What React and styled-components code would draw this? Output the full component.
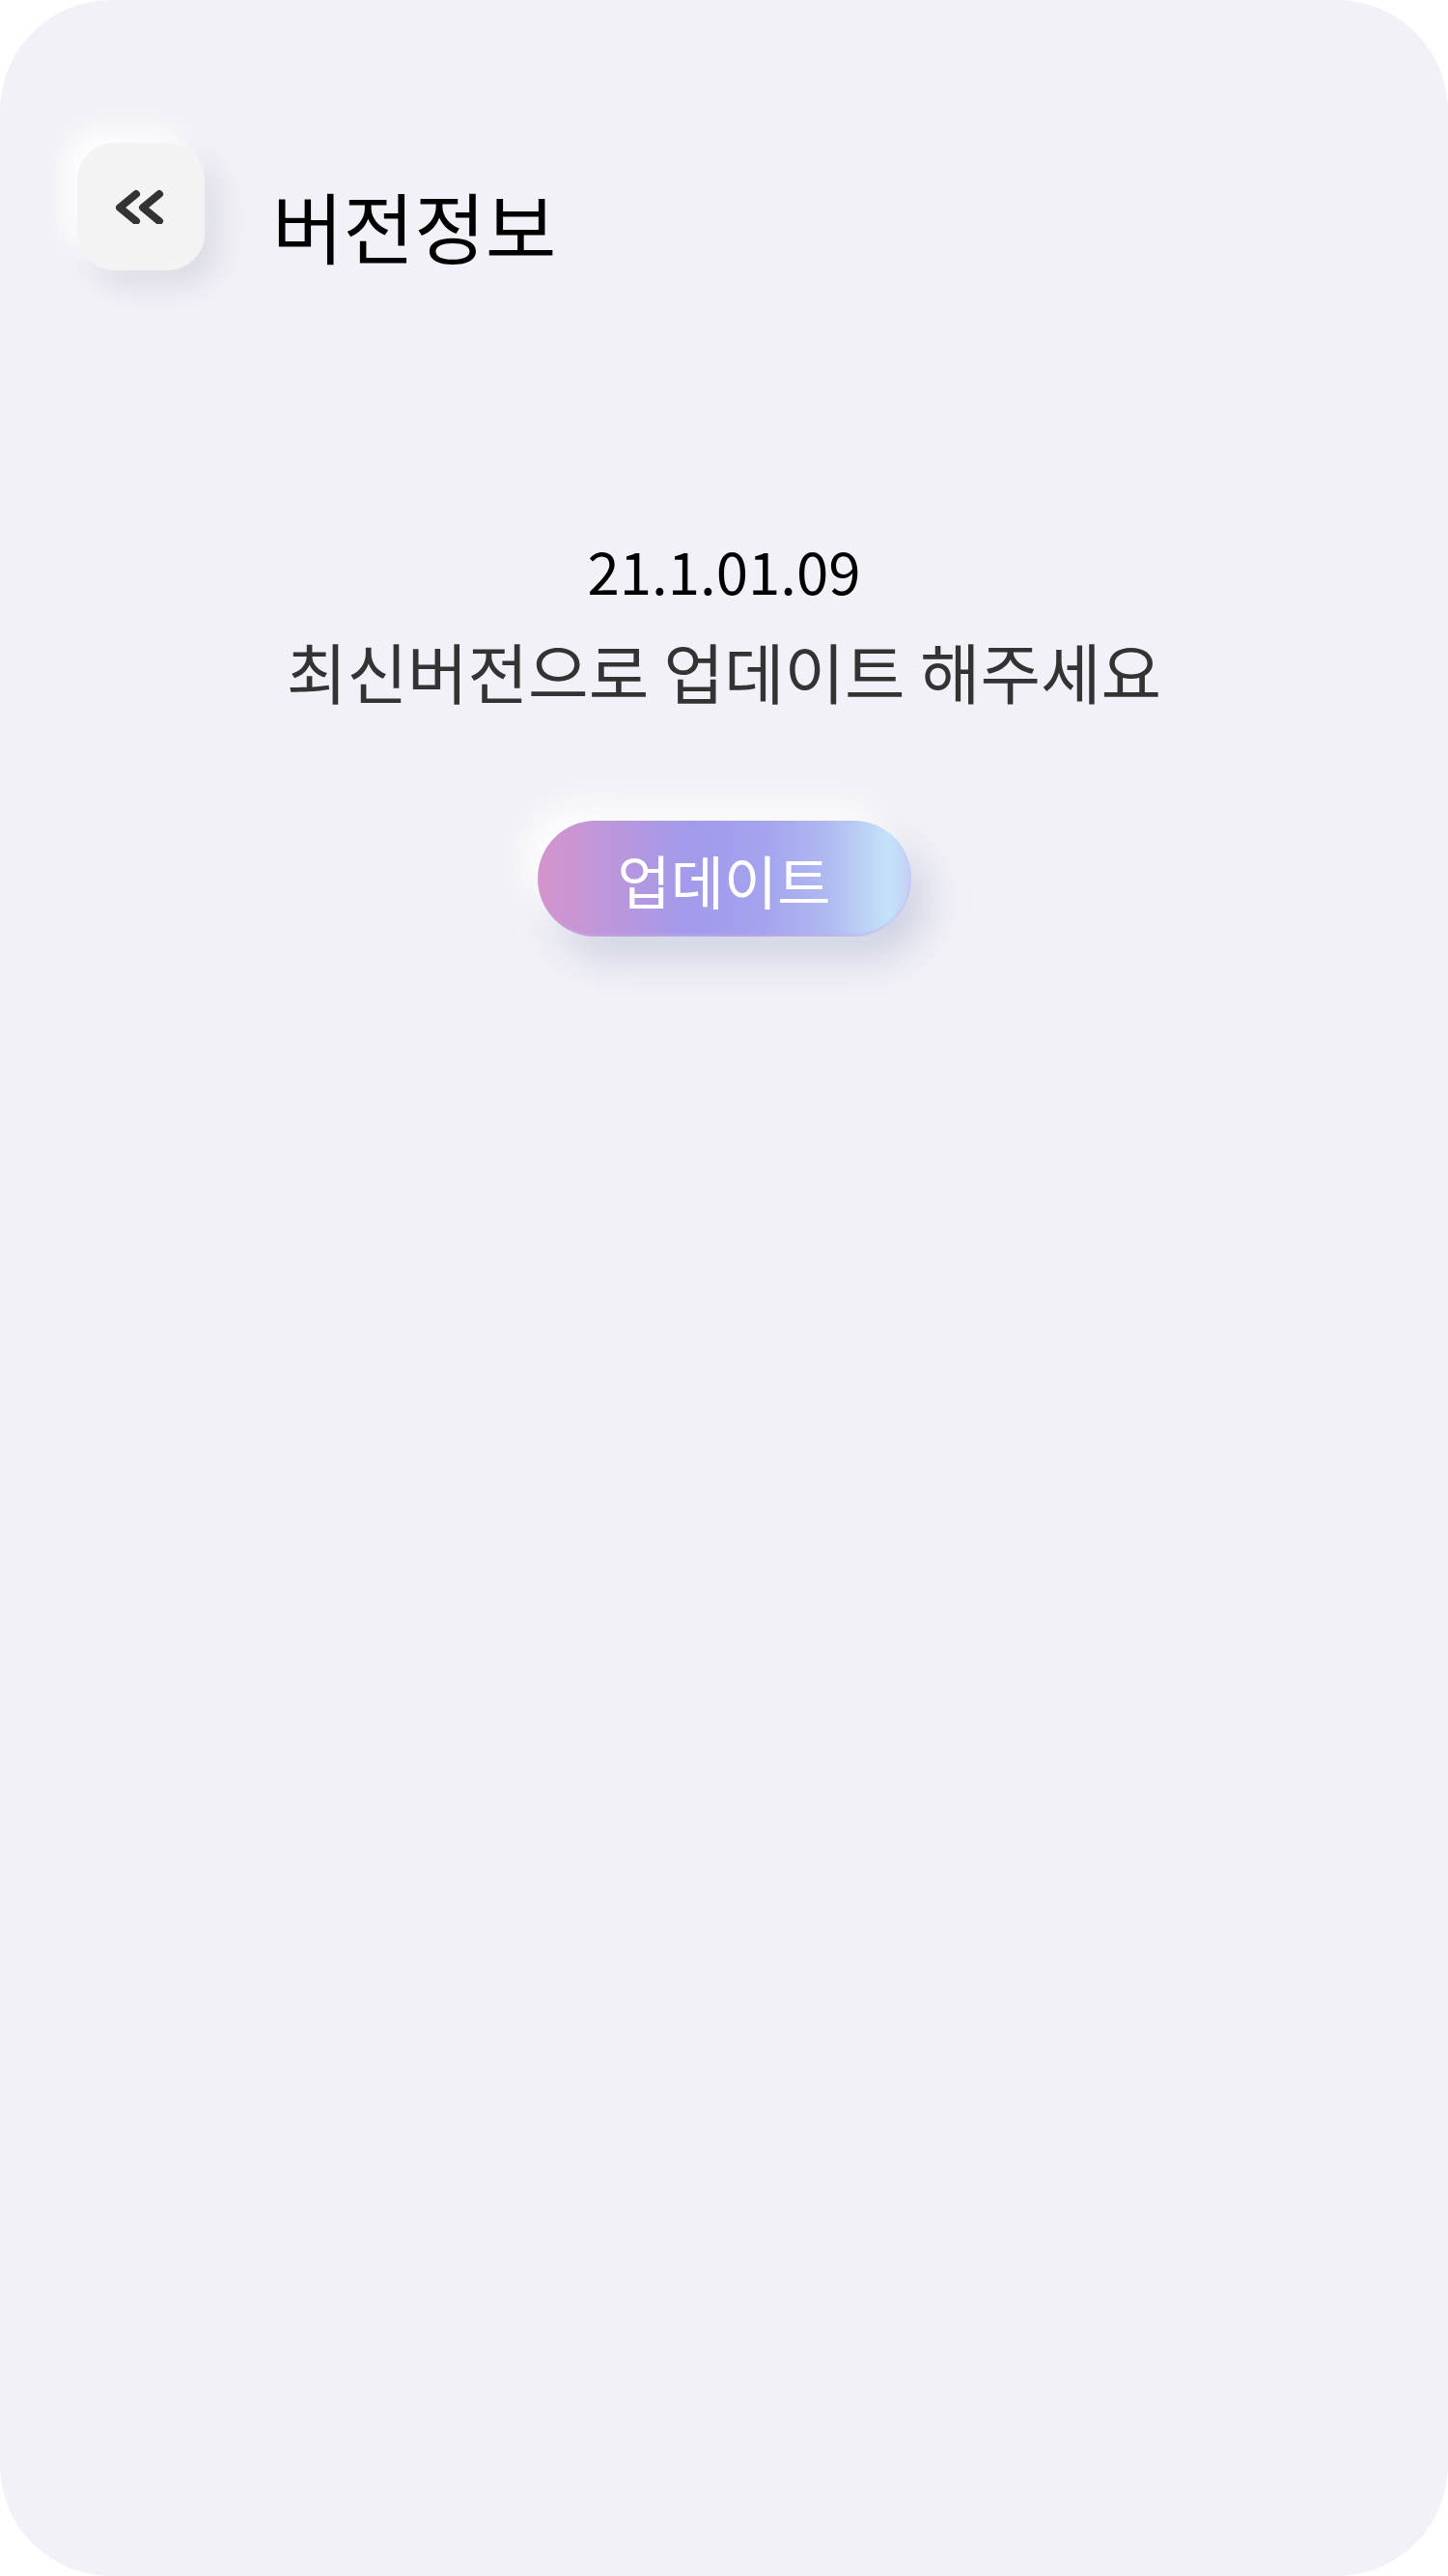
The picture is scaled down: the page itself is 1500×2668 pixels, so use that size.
import styled, { createGlobalStyle } from "styled-components";

const GlobalStyle = createGlobalStyle`
    html, body {
        margin: 0;
        padding: 0;
        background: #FFFFFF;
    }
    * {
        box-sizing: border-box;
    }
`;

export default function App() {
    return (
        <>
            <GlobalStyle />
            <Screen>
                <Header>
                    <BackButton aria-label="뒤로">
                        <svg width="52" height="36" viewBox="0 0 52 36" fill="none">
                            <path d="M21 5 L4 19 L21 33" stroke="#333333" strokeWidth="8" strokeLinecap="round" strokeLinejoin="round" />
                            <path d="M45 5 L28 19 L45 33" stroke="#333333" strokeWidth="8" strokeLinecap="round" strokeLinejoin="round" />
                        </svg>
                    </BackButton>
                    <Title>버전정보</Title>
                </Header>
                <Content>
                    <Version>21.1.01.09</Version>
                    <Message>최신버전으로 업데이트 해주세요</Message>
                    <UpdateButton>업데이트</UpdateButton>
                </Content>
            </Screen>
        </>
    );
}

const Screen = styled.div`
    width: 1500px;
    height: 2668px;
    border-radius: 115px;
    background: #F2F1F7;
    overflow: hidden;
    font-family: "Noto Sans CJK KR", "Noto Sans", sans-serif;
    display: flex;
    flex-direction: column;
`;

const Header = styled.div`
    display: flex;
    align-items: center;
    gap: 70px;
    padding: 148px 0 0 80px;
`;

const BackButton = styled.button`
    width: 132px;
    height: 132px;
    border: none;
    border-radius: 38px;
    background: #F3F3F4;
    display: flex;
    align-items: center;
    justify-content: center;
    padding: 0;
    box-shadow: -14px -14px 28px rgba(255, 255, 255, 0.9),
        14px 16px 30px rgba(190, 192, 210, 0.45);
`;

const Title = styled.h1`
    margin: 0;
    margin-top: 36px;
    font-size: 80px;
    font-weight: 400;
    line-height: 1;
    color: #000000;
`;

const Content = styled.div`
    display: flex;
    flex-direction: column;
    align-items: center;
    padding-top: 270px;
`;

const Version = styled.p`
    margin: 0;
    font-size: 60px;
    font-weight: 400;
    line-height: 80px;
    color: #000000;
`;

const Message = styled.p`
    margin: 20px 0 0;
    font-size: 68px;
    font-weight: 400;
    line-height: 90px;
    color: #333333;
`;

const UpdateButton = styled.button`
    margin-top: 110px;
    width: 387px;
    height: 120px;
    border: none;
    border-radius: 60px;
    font-family: inherit;
    font-size: 60px;
    font-weight: 400;
    color: #FFFFFF;
    background: linear-gradient(90deg, #D594CB 0%, #BB97DC 20%, #A29AEB 40%, #A4A3EE 60%, #B0BAF1 78%, #C3E3F8 94%, #C4CEF5 100%);
    box-shadow: -16px -16px 32px rgba(255, 255, 255, 0.85),
        16px 22px 40px rgba(170, 178, 205, 0.5),
        inset 0 -2px 3px rgba(200, 170, 230, 0.6);
`;
